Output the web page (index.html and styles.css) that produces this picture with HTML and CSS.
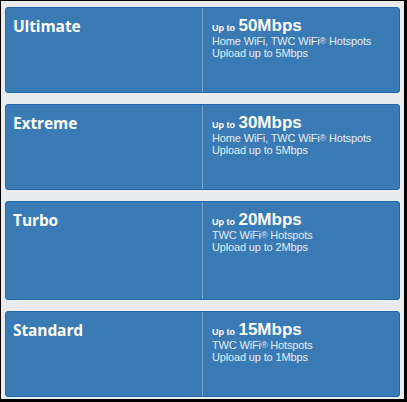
FILE: index.html
```html
<!DOCTYPE html>
<html>
<head>
<meta charset="utf-8">
<link rel="stylesheet" href="styles.css">
</head>
<body>
<div class="frame">
  <div class="card">
    <div class="name">Ultimate</div>
    <div class="info">
      <div class="speed"><span class="upto">Up to</span> <span class="mbps">50Mbps</span></div>
      <div class="line">Home WiFi, TWC WiFi<sup>®</sup> Hotspots</div>
      <div class="line">Upload up to 5Mbps</div>
    </div>
  </div>
  <div class="card">
    <div class="name">Extreme</div>
    <div class="info">
      <div class="speed"><span class="upto">Up to</span> <span class="mbps">30Mbps</span></div>
      <div class="line">Home WiFi, TWC WiFi<sup>®</sup> Hotspots</div>
      <div class="line">Upload up to 5Mbps</div>
    </div>
  </div>
  <div class="card tall">
    <div class="name">Turbo</div>
    <div class="info">
      <div class="speed"><span class="upto">Up to</span> <span class="mbps">20Mbps</span></div>
      <div class="line">TWC WiFi<sup>®</sup> Hotspots</div>
      <div class="line">Upload up to 2Mbps</div>
    </div>
  </div>
  <div class="card">
    <div class="name">Standard</div>
    <div class="info">
      <div class="speed"><span class="upto">Up to</span> <span class="mbps">15Mbps</span></div>
      <div class="line">TWC WiFi<sup>®</sup> Hotspots</div>
      <div class="line">Upload up to 1Mbps</div>
    </div>
  </div>
</div>
</body>
</html>
```
FILE: styles.css
```css
html, body {
  margin: 0;
  padding: 0;
  background: #000;
}
body {
  width: 407px;
  height: 402px;
  overflow: hidden;
}
.frame {
  box-sizing: border-box;
  margin: 1px 3px 0 1px;
  width: 403px;
  height: 398px;
  background: #ebecee;
  padding: 6px 4px 0 4px;
  display: flex;
  flex-direction: column;
  gap: 11px;
}
.card {
  box-sizing: border-box;
  height: 86px;
  background: #3a7ab5;
  border: 1px solid #1f67aa;
  border-radius: 3px;
  display: grid;
  grid-template-columns: 197px 1fr;
  color: #fff;
}
.card.tall {
  height: 99px;
}
.name {
  border-right: 1px solid #7aa3cc;
  padding: 7px 0 0 7px;
  font-family: "Open Sans", sans-serif;
  font-weight: 700;
  font-size: 15.5px;
  line-height: 22px;
  letter-spacing: -0.1px;
}
.info {
  padding: 8px 0 0 9px;
  font-family: "Liberation Sans", Arial, sans-serif;
}
.speed {
  line-height: 20px;
  height: 19px;
}
.upto {
  font-size: 9px;
  font-weight: 700;
}
.mbps {
  font-size: 17px;
  font-weight: 700;
  margin-left: -1px;
}
.line {
  font-size: 11px;
  line-height: 12px;
  color: #e3ecf5;
  letter-spacing: -0.15px;
}
sup {
  font-size: 9px;
  vertical-align: 1px;
  line-height: 0;
}
```
